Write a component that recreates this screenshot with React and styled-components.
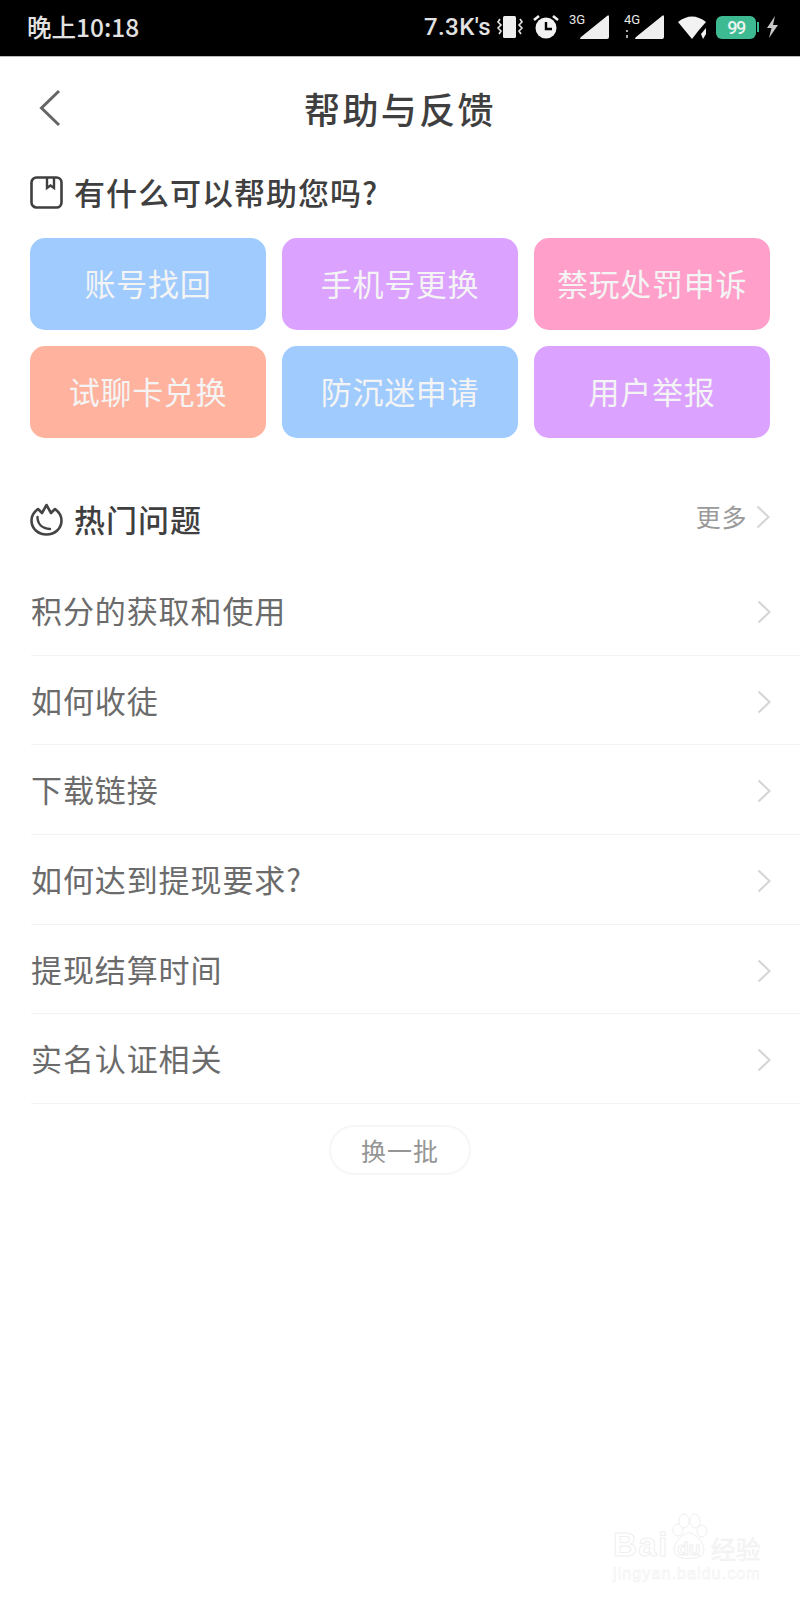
import React from "react";
import styled, { createGlobalStyle } from "styled-components";

const Global = createGlobalStyle`
  html, body { margin: 0; padding: 0; background: #fff; }
  body { font-family: "Noto Sans CJK SC", "Noto Sans", sans-serif; }
`;

const Page = styled.div`
  position: relative;
  width: 800px;
  height: 1600px;
  overflow: hidden;
  background: #fff;
`;

const StatusBar = styled.div`
  height: 57px;
  background: #000;
  border-bottom: 1px solid #bbb;
  box-sizing: border-box;
  display: flex;
  align-items: center;
  justify-content: space-between;
  padding: 0 21px 2px 27px;
  color: #e2e2e2;
`;

const Clock = styled.span`
  font-size: 24.5px;
  font-weight: 500;
  line-height: 1;
`;

const StatusRight = styled.div`
  display: flex;
  align-items: center;
`;

const Speed = styled.span`
  font-family: "Roboto", sans-serif;
  font-size: 24px;
  font-weight: 500;
  letter-spacing: 0.4px;
  line-height: 1;
  width: 68px;
  margin-right: 4px;
  white-space: nowrap;
`;

const StatusIcon = styled.svg`
  flex: none;
  margin-left: ${(p) => p.$gap || 0}px;
`;

const Battery = styled.span`
  width: 40px;
  height: 23px;
  margin-left: 9px;
  margin-right: 1px;
  border-radius: 6px;
  background: #3dba92;
  color: #e8f5ee;
  font-family: "Roboto", sans-serif;
  font-size: 18px;
  font-weight: 500;
  letter-spacing: -1.5px;
  display: flex;
  align-items: center;
  justify-content: center;
`;

const NavBar = styled.div`
  height: 107px;
  display: flex;
  align-items: center;
  justify-content: center;
  position: relative;
`;

const BackButton = styled.span`
  position: absolute;
  left: 38px;
  top: 32px;
  display: flex;
`;

const Title = styled.h1`
  margin: -6px 0 0;
  font-size: 36px;
  font-weight: 500;
  letter-spacing: 2.4px;
  color: #3f3f3f;
  line-height: 1;
`;

const SectionHead = styled.div`
  display: flex;
  align-items: center;
  gap: 11px;
  height: 56px;
  padding: 0 30px;
  color: #3f3f3f;
  font-size: 31px;
  font-weight: 500;
  letter-spacing: 1px;
`;

const HeadText = styled.span`
  flex: 1;
  line-height: 1;
  margin-top: -2px;
`;

const MoreText = styled.span`
  font-size: 25px;
  font-weight: 400;
  letter-spacing: 0.6px;
  color: #9a9a9a;
  line-height: 1;
  margin-top: -6px;
  margin-right: -2px;
`;

const Grid = styled.div`
  display: grid;
  grid-template-columns: repeat(3, 1fr);
  gap: 16px;
  padding: 0 30px;
  margin-top: 18px;
`;

const Tile = styled.div`
  height: 92px;
  box-sizing: border-box;
  padding-bottom: 4px;
  border-radius: 15px;
  background: ${(p) => p.$bg};
  color: #f4f4f4;
  font-size: 31px;
  letter-spacing: 0.7px;
  display: flex;
  align-items: center;
  justify-content: center;
`;

const HotHead = styled(SectionHead)`
  margin-top: 53px;
`;

const List = styled.div`
  margin-top: 19px;
  padding-left: 31px;
`;

const Row = styled.div`
  height: 89.7px;
  box-sizing: border-box;
  border-bottom: 1px solid #f3f3f3;
  padding-right: 29px;
  padding-bottom: 2px;
  display: flex;
  align-items: center;
  justify-content: space-between;
  color: #6b6b6b;
  font-size: 31px;
  letter-spacing: 0.9px;
`;

const RowChevron = styled.span`
  display: flex;
  margin-top: 5px;
`;

const MoreChevron = styled.span`
  display: flex;
  margin-top: -4px;
`;

const RefreshWrap = styled.div`
  display: flex;
  justify-content: center;
  margin-top: 21px;
`;

const Refresh = styled.div`
  width: 142px;
  height: 50px;
  box-sizing: border-box;
  border: 2px solid #f6f6f6;
  border-radius: 25px;
  color: #959595;
  font-size: 25px;
  letter-spacing: 1px;
  display: flex;
  align-items: center;
  justify-content: center;
`;

const Mark = styled.div`
  position: absolute;
  left: 613px;
  top: 1513px;
  width: 160px;
  color: #fff;
  -webkit-text-stroke: 1px #efefef;
`;

const MarkLogo = styled.div`
  display: flex;
  align-items: flex-end;
  height: 48px;
  font-family: "Liberation Sans", sans-serif;
  font-size: 33px;
  letter-spacing: 1.5px;
  line-height: 1;
  font-weight: 700;
`;

const MarkDu = styled.span`
  position: relative;
  display: flex;
  width: 40px;
  height: 42px;
  align-items: flex-end;
  justify-content: center;
  font-size: 19px;
  letter-spacing: 0;
  padding-bottom: 3px;
  box-sizing: border-box;
`;

const MarkPaw = styled.svg`
  position: absolute;
  left: 0;
  top: -6px;
`;

const DuText = styled.span`
  position: relative;
`;

const MarkCn = styled.span`
  font-family: "Noto Sans CJK SC", sans-serif;
  font-size: 25px;
  font-weight: 400;
  letter-spacing: 0;
  margin-left: 2px;
  color: #f6f6f6;
  -webkit-text-stroke: 0.4px #efefef;
`;

const MarkUrl = styled.div`
  font-family: "Liberation Sans", sans-serif;
  font-size: 16px;
  letter-spacing: 1.1px;
  margin-top: 4px;
  -webkit-text-stroke: 0.5px #efefef;
`;

const Chevron = () => (
  <svg width={14} height={24} viewBox="0 0 14 24" fill="none">
    <path d="M1.5 1.5 L12.5 12 L1.5 22.5" stroke="#d6d6d6" strokeWidth="2.2" />
  </svg>
);

const tiles = [
  ["账号找回", "#9fcbff"],
  ["手机号更换", "#dba2ff"],
  ["禁玩处罚申诉", "#ff9fca"],
  ["试聊卡兑换", "#ffb39f"],
  ["防沉迷申请", "#9fcbff"],
  ["用户举报", "#dba2ff"],
];

const rows = ["积分的获取和使用", "如何收徒", "下载链接", "如何达到提现要求?", "提现结算时间", "实名认证相关"];

const Signal = ({ label, extra, gap }) => (
  <StatusIcon $gap={gap} width="42" height="30" viewBox="0 0 42 30">
    <path d="M13 27 L39 27 Q41 27 41 25 L41 5 Q41 2 39 4 L13 25 Q11 27 13 27Z" fill="#efefef" />
    <text x="1" y="12" fontSize="13" fontFamily="Roboto, sans-serif" fill="#e8e8e8">{label}</text>
    {extra && <path d="M4 18 v2 M4 23 v3" stroke="#aaa" strokeWidth="2" fill="none" />}
  </StatusIcon>
);

export default function App() {
  return (
    <Page>
      <Global />
      <StatusBar>
        <Clock>晚上10:18</Clock>
        <StatusRight>
          <Speed>7.3K's</Speed>
          <StatusIcon width="28" height="26" viewBox="0 0 28 26" fill="none">
            <rect x="7" y="2" width="13" height="22" rx="1.5" fill="#efefef" />
            <path d="M4 5 L2 8 L5 11 L2 14 L5 17 L3 20 M24 5 L26 8 L23 11 L26 14 L23 17 L25 20" stroke="#e5e5e5" strokeWidth="1.6" />
          </StatusIcon>
          <StatusIcon $gap={8} width="28" height="28" viewBox="0 0 28 28">
            <circle cx="14" cy="15" r="10.5" fill="#f2f2f2" />
            <path d="M14 9 V16 H20" stroke="#000" strokeWidth="2.4" fill="none" />
            <path d="M2 7 L7 3 M26 7 L21 3" stroke="#f2f2f2" strokeWidth="2.6" />
          </StatusIcon>
          <Signal gap={8} label="3G" />
          <Signal gap={13} label="4G" extra />
          <StatusIcon $gap={12} width="30" height="26" viewBox="0 0 30 26">
            <path d="M1 8 Q15 -3 29 8 L22 16 L15 25 L1 8Z" fill="#f2f2f2" />
            <path d="M24 20 L29 14 L29 20 L26 25 Z" fill="#f2f2f2" />
          </StatusIcon>
          <Battery>99</Battery>
          <StatusIcon width="2" height="10" viewBox="0 0 2 10">
            <rect width="2" height="10" fill="#3dba92" />
          </StatusIcon>
          <StatusIcon $gap={6} width="14" height="22" viewBox="0 0 14 22">
            <path d="M10 0 L2 12 H6.5 L4 22 L13 9 H8 Z" fill="#c8c8c8" />
          </StatusIcon>
        </StatusRight>
      </StatusBar>

      <NavBar>
        <BackButton>
          <svg width="24" height="38" viewBox="0 0 24 38" fill="none">
            <path d="M21 2 L3.5 19 L21 36" stroke="#666" strokeWidth="3" />
          </svg>
        </BackButton>
        <Title>帮助与反馈</Title>
      </NavBar>

      <SectionHead>
        <svg width="33" height="33" viewBox="0 0 33 33" fill="none">
          <rect x="1.5" y="1.5" width="30" height="30" rx="5" stroke="#3f3f3f" strokeWidth="2.6" />
          <path d="M17 2 V12 L20.5 9.5 L24 12 V2" stroke="#3f3f3f" strokeWidth="2.4" />
        </svg>
        <HeadText>有什么可以帮助您吗?</HeadText>
      </SectionHead>

      <Grid>
        {tiles.map(([t, c]) => (
          <Tile key={t} $bg={c}>{t}</Tile>
        ))}
      </Grid>

      <HotHead>
        <svg width="33" height="33" viewBox="0 0 33 33" fill="none">
          <path d="M8 6 L12 10 L16.5 2 L21 10 L25 6 C29 9 31.5 13 31.5 17.5 C31.5 25.5 25 31.5 16.5 31.5 C8 31.5 1.5 25.5 1.5 17.5 C1.5 13 4 9 8 6Z" stroke="#444" strokeWidth="2.6" strokeLinejoin="round" />
          <path d="M7.5 14 C7.5 21 12 25.5 20 26" stroke="#444" strokeWidth="2.4" strokeLinecap="round" />
        </svg>
        <HeadText>热门问题</HeadText>
        <MoreText>更多</MoreText>
        <MoreChevron><Chevron /></MoreChevron>
      </HotHead>

      <List>
        {rows.map((r) => (
          <Row key={r}>
            {r}
            <RowChevron><Chevron /></RowChevron>
          </Row>
        ))}
      </List>

      <RefreshWrap>
        <Refresh>换一批</Refresh>
      </RefreshWrap>

      <Mark>
        <MarkLogo>
          Bai
          <MarkDu>
            <MarkPaw width="40" height="48" viewBox="0 0 40 48" fill="#fff" stroke="#efefef" strokeWidth="1">
              <ellipse cx="9" cy="17" rx="5" ry="6" />
              <ellipse cx="15" cy="8" rx="5" ry="7" />
              <ellipse cx="26" cy="8" rx="5" ry="7" />
              <ellipse cx="33" cy="18" rx="5" ry="6" />
              <path d="M20 20 C27 20 38 32 34 41 C30 47 10 47 6 41 C2 32 13 20 20 20Z" />
            </MarkPaw>
            <DuText>du</DuText>
          </MarkDu>
          <MarkCn>经验</MarkCn>
        </MarkLogo>
        <MarkUrl>jingyan.baidu.com</MarkUrl>
      </Mark>
    </Page>
  );
}
